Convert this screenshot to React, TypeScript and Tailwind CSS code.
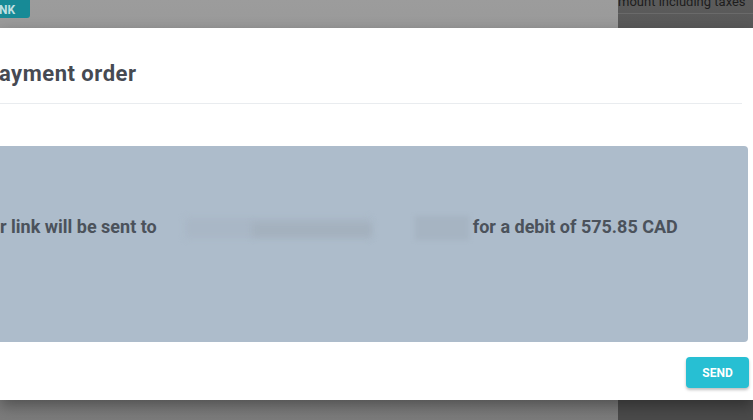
import React from "react";

export default function App() {
  return (
    <div
      className="relative w-[753px] h-[420px] overflow-hidden bg-[#999999]"
      style={{ fontFamily: "Roboto, 'Liberation Sans', sans-serif" }}
    >
      {/* backdrop page */}
      <div className="flex h-full">
        <div className="flex-1 bg-gradient-to-b from-[#9c9c9c] via-[#8a8a8a] to-[#7b7b7b]">
          <div className="w-[30px] h-[19px] bg-[#178a96] rounded-br-[3px] flex items-end pb-[2px] -mt-[1px]">
            <span className="text-[12px] font-bold leading-none text-[#bfe0e3] -ml-[1px]">NK</span>
          </div>
        </div>
        <div className="w-[135px] bg-gradient-to-b from-[#5b5b5b] via-[#4a4a4a] to-[#4a4a4a]">
          <div className="h-[20px] border-b border-[#6a6a6a] -mt-[6px] flex items-start">
            <span className="text-[13px] leading-[16px] text-[#1d1d1d] whitespace-nowrap">mount including taxes</span>
          </div>
        </div>
      </div>

      {/* modal */}
      <div className="absolute left-0 right-0 top-[28px] h-[372px] bg-white shadow-[0_6px_14px_rgba(0,0,0,0.35)] flex flex-col">
        <div className="pt-[32px] pb-[15px] mr-[11px] border-b border-[#e9ecef]">
          <h2 className="text-[22px] leading-[28px] font-bold tracking-[0.5px] text-[#464a52] -ml-[1px]">ayment order</h2>
        </div>
        <div className="mt-[42px] mr-[5px] h-[196px] bg-[#adbccb] rounded-r-[4px] pt-[69px]">
          <div className="flex items-center h-[24px] text-[18px] leading-[24px] font-bold text-[#4b525b] whitespace-nowrap">
            <span>r link will be sent to</span>
            <div className="relative w-[316px] h-[24px]">
              <div className="absolute left-[28px] top-[3px] w-[185px] h-[20px] bg-[#a9b7c6] blur-[3px]" />
              <div className="absolute left-[95px] top-[8px] w-[120px] h-[14px] bg-[#a4b1be] blur-[3px]" />
              <div className="absolute left-[258px] top-[1px] w-[54px] h-[24px] bg-[#a6b4c2] blur-[2px]" />
            </div>
            <span>for a debit of 575.85 CAD</span>
          </div>
        </div>
        <div className="flex justify-end mt-[15px] pr-[4px]">
          <button className="w-[63px] h-[31px] rounded-[4px] bg-[#27bfd3] text-white text-[12px] font-bold shadow-[0_2px_3px_rgba(0,0,0,0.25)]">
            SEND
          </button>
        </div>
      </div>
    </div>
  );
}
